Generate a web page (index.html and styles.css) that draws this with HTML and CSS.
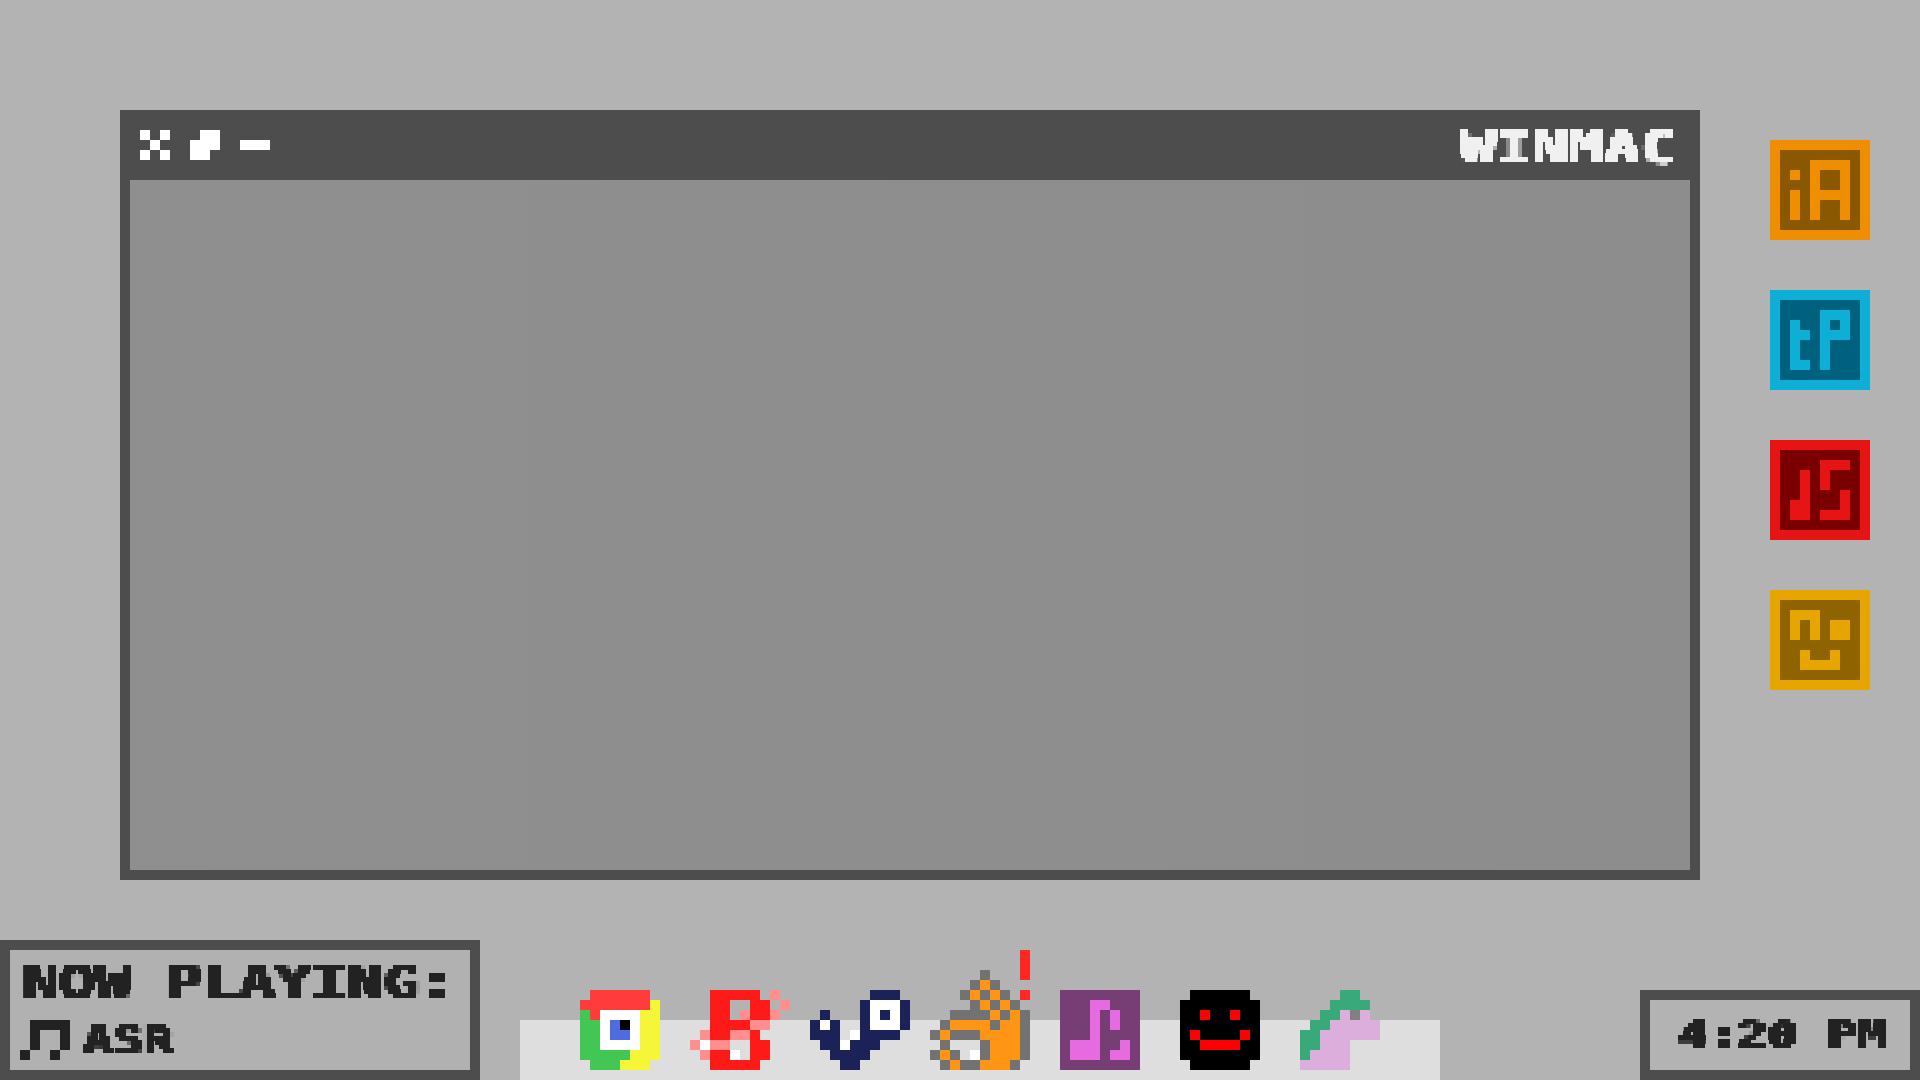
FILE: index.html
```html
<!DOCTYPE html>
<html lang="en">
<head>
<meta charset="utf-8">
<title>WINMAC</title>
<link rel="stylesheet" href="styles.css">
</head>
<body>
<svg class="defs" width="0" height="0" aria-hidden="true">
  <filter id="px" x="0" y="0" width="100%" height="100%" color-interpolation-filters="sRGB">
    <feFlood x="2" y="2" width="1" height="1"/>
    <feComposite width="4" height="4"/>
    <feTile result="grid"/>
    <feComposite in="SourceGraphic" in2="grid" operator="in"/>
    <feMorphology operator="dilate" radius="2"/>
    <feComponentTransfer><feFuncA type="linear" slope="3" intercept="-0.7"/></feComponentTransfer>
  </filter>
</svg>
<main class="desktop">
  <section class="window">
    <header class="titlebar">
      <div class="controls">
        <svg class="ctl" width="30" height="30" viewBox="0 0 3 3" shape-rendering="crispEdges"><path fill="#fff" d="M0 0h1v1H0zM2 0h1v1H2zM1 1h1v1H1zM0 2h1v1H0zM2 2h1v1H2z"/></svg>
        <svg class="ctl" width="30" height="30" viewBox="0 0 3 3" shape-rendering="crispEdges"><path fill="#fff" d="M1 0h2v2H2v1H0V1h1z"/></svg>
        <svg class="ctl" width="30" height="30" viewBox="0 0 3 3" shape-rendering="crispEdges"><path fill="#fff" d="M0 1h3v1H0z"/></svg>
      </div>
      <span class="title">WINMAC</span>
    </header>
    <div class="window-body"></div>
  </section>
  <aside class="apps">
    <svg class="app" width="100" height="100" viewBox="0 0 10 10" shape-rendering="crispEdges"><path fill="#ee8e00" d="M0 0h10v10H0z"/><path fill="#8a5800" d="M1 1h8v8H1z"/><path fill="#ee8e00" d="M2 3h1v1H2zM2 5h1v3H2zM4 2h4v6H7V6H5v2H4zM5 3v2h2V3z"/></svg>
    <svg class="app" width="100" height="100" viewBox="0 0 10 10" shape-rendering="crispEdges"><path fill="#0dafd6" d="M0 0h10v10H0z"/><path fill="#00617f" d="M1 1h8v8H1z"/><path fill="#0dafd6" d="M2 3h1v1h1v1H3v2h1v1H2zM5 2h3v3H6v3H5zM6 3v1h1V3z"/></svg>
    <svg class="app" width="100" height="100" viewBox="0 0 10 10" shape-rendering="crispEdges"><path fill="#e61414" d="M0 0h10v10H0z"/><path fill="#7a0000" d="M1 1h8v8H1z"/><path fill="#e61414" d="M3 3h1v5H2V6h1zM5 2h3v1H6v2H5zM7 5h1v3H5V7h2z"/></svg>
    <svg class="app" width="100" height="100" viewBox="0 0 10 10" shape-rendering="crispEdges"><path fill="#e6a500" d="M0 0h10v10H0z"/><path fill="#8f6400" d="M1 1h8v8H1z"/><path fill="#e6a500" d="M2 2h3v3H4V3H3v2H2zM6 3h2v2H6zM3 6h1v1h2V6h1v2H3z"/></svg>
  </aside>
</main>
<footer class="taskbar">
  <div class="now-playing">
    <span class="np-label">NOW PLAYING:</span>
    <div class="np-track">
      <svg class="np-note" width="50" height="40" viewBox="0 0 5 4" shape-rendering="crispEdges"><path fill="#222" d="M1 0h4v3H4V1H2v2H1zM0 3h1v1H0zM3 3h1v1H3z"/></svg>
      <span class="np-name">ASR</span>
    </div>
  </div>
  <nav class="dock">
    <div class="slot"><svg width="80" height="80" viewBox="0 0 8 8" shape-rendering="crispEdges"><path fill="#ff3b3b" d="M1 0h6v2H2v1H1V2H0V1h1z"/><path fill="#f6f639" d="M7 1h1v6H7v1H4V7h1V6h1V2h1z"/><path fill="#42c654" d="M0 2h1v1h1v3h3v1H4v1H1V7H0z"/><path fill="#fff" d="M2 2h4v4H2z"/><path fill="#4e6bdf" d="M3 3h2v2H3z"/><path fill="#000" d="M4 3h1v1H4z"/></svg></div>
    <div class="slot"><svg width="100" height="80" viewBox="0 0 10 8" shape-rendering="crispEdges"><path fill="#ff1a1a" d="M2 0h5v1H2zM2 1h2v1H2zM6 1h2v1H6zM2 2h2v1H2zM6 2h2v1H6zM2 3h4v1H2zM2 4h2v1H2zM6 4h1v1H6zM6 5h2v1H6zM2 6h2v1H2zM6 6h2v1H6zM2 7h5v1H2z"/><path fill="#ff8e8e" d="M8 0h1v1H8zM9 1h1v1H9zM8 2h1v1H8zM5 2h1v1H5zM6 3h2v1H6zM1 4h1v1H1zM4 4h2v1H4zM0 5h1v1H0zM2 5h2v1H2zM1 6h1v1H1z"/><path fill="#fff" d="M1 5h1v1H1zM4 6h1v1H4z"/></svg></div>
    <div class="slot"><svg width="100" height="80" viewBox="0 0 10 8" shape-rendering="crispEdges"><path fill="#1a2258" d="M6 0h3v1H6zM5 1h1v3H5zM9 1h1v3H9zM1 2h1v1H1zM7 2h1v1H7zM0 3h1v1H0zM2 3h1v1H2zM0 4h3v1H0zM5 4h4v1H5zM1 5h2v1H1zM4 5h3v1H4zM2 6h4v1H2zM3 7h2v1H3z"/><path fill="#fff" d="M6 1h3v1H6zM6 2h1v1H6zM8 2h1v1H8zM6 3h3v1H6zM1 3h1v1H1zM4 4h1v1H4zM3 5h1v1H3z"/></svg></div>
    <div class="slot"><svg width="100" height="120" viewBox="0 -2 10 12" shape-rendering="crispEdges"><path fill="#ff2626" d="M9-2h1v3H9zM9 2h1v1H9z"/><path fill="#727272" d="M5 0h1v1H5zM4 1h1v1H4zM6 1h1v1H6zM3 2h1v1H3zM5 2h1v1H5zM7 2h1v1H7zM4 3h1v1H4zM6 3h1v1H6zM8 3h1v1H8zM2 4h4v1H2zM7 4h1v1H7zM9 4h1v5H9zM1 5h1v1H1zM6 5h1v1H6zM0 6h1v1H0zM2 6h3v1H2zM1 7h1v1H1zM5 7h1v2H5zM0 8h1v1H0zM2 8h1v1H2zM1 9h1v1H1zM3 9h2v1H3zM8 9h1v1H8z"/><path fill="#ff9514" d="M5 1h1v1H5zM4 2h1v1H4zM6 2h1v1H6zM5 3h1v1H5zM7 3h1v1H7zM6 4h1v1H6zM8 4h1v1H8zM2 5h4v1H2zM7 5h2v1H7zM1 6h1v1H1zM5 6h4v1H5zM6 7h3v2H6zM1 8h1v1H1zM2 9h1v1H2zM5 9h3v1H5z"/><path fill="#fff" d="M4 8h1v1H4z"/></svg></div>
    <div class="slot"><svg width="80" height="80" viewBox="0 0 8 8" shape-rendering="crispEdges"><path fill="#773e75" d="M0 0h8v8H0z"/><path fill="#e66be0" d="M3 1h2v1H4v5H1V5h2zM5 2h1v2H5zM6 5h1v2H5V6h1z"/></svg></div>
    <div class="slot"><svg width="80" height="80" viewBox="0 0 8 8" shape-rendering="crispEdges"><path fill="#000" d="M1 0h6v1h1v6H7v1H1V7H0V1h1z"/><path fill="#f00" d="M2 2h1v1H2zM5 2h1v1H5zM1 4h1v1H1zM6 4h1v1H6zM2 5h4v1H2z"/></svg></div>
    <div class="slot"><svg width="80" height="80" viewBox="0 0 8 8" shape-rendering="crispEdges"><path fill="#3aa97a" d="M4 0h2v1h1v1H4v1H3v1H2v2H1v1H0V4h1V3h1V2h1V1h1z"/><path fill="#dcaedc" d="M4 2h3v1h1v2H5v3H0V7h1V6h1V4h1V3h1z"/><path fill="#808080" d="M5 2h1v1H5z"/></svg></div>
  </nav>
  <div class="clock"><span class="clock-time">4:20 PM</span></div>
</footer>
</body>
</html>
```
FILE: styles.css
```css
* { box-sizing: border-box; }
html, body { margin: 0; padding: 0; }
body {
  width: 1920px;
  height: 1080px;
  overflow: hidden;
  background: #b3b3b3;
  font-family: "DejaVu Sans Mono", "Liberation Mono", monospace;
  font-weight: 700;
  color: #222;
}
.defs { position: absolute; }
svg { display: block; }

.desktop { display: flex; align-items: flex-start; padding: 110px 0 0 120px; height: 940px; }
.window {
  width: 1580px;
  height: 770px;
  border: 10px solid #4d4d4d;
  border-top-width: 0;
  display: flex;
  flex-direction: column;
  background: #4d4d4d;
}
.titlebar { height: 70px; display: flex; align-items: center; justify-content: space-between; padding: 0 0 0 10px; flex: none; }
.controls { display: flex; gap: 20px; }
.window-body { flex: 1; background: linear-gradient(90deg, #8f8f8f, #8d8d8d); }

.title {
  display: block;
  font-size: 44px;
  line-height: 50px;
  width: 162px;
  color: #f0f0f0;
  white-space: nowrap;
  margin-right: 68px;
  padding-top: 6px;
  transform: scaleX(1.36);
  transform-origin: left center;
  filter: url(#px);
}

.apps { display: flex; flex-direction: column; gap: 50px; margin: 30px 0 0 70px; }

.taskbar { display: flex; align-items: flex-end; height: 140px; }
.now-playing {
  width: 480px;
  height: 140px;
  border: 10px solid #4d4d4d;
  background: #b1b1b1;
  padding: 11px 0 0 13px;
  flex: none;
}
.np-label {
  display: block;
  font-size: 44px;
  line-height: 44px;
  width: 330px;
  white-space: nowrap;
  transform: scaleX(1.36);
  transform-origin: left center;
  filter: url(#px);
}
.np-track { display: flex; align-items: center; margin-top: 15px; margin-left: -3px; }
.np-name {
  display: block;
  font-size: 38px;
  line-height: 40px;
  margin-left: 13px;
  width: 70px;
  white-space: nowrap;
  transform: scaleX(1.32);
  transform-origin: left center;
  filter: url(#px);
}
.dock {
  width: 920px;
  height: 60px;
  margin-left: 40px;
  background: #dedede;
  padding: 0 0 10px 40px;
  display: flex;
  align-items: flex-end;
  flex: none;
}
.slot { width: 120px; display: flex; justify-content: center; flex: none; }
.clock {
  width: 280px;
  height: 90px;
  margin-left: 200px;
  border: 10px solid #4d4d4d;
  background: #b3b3b3;
  display: flex;
  align-items: center;
  padding-left: 28px;
  flex: none;
}
.clock-time {
  display: block;
  font-size: 36px;
  line-height: 40px;
  width: 160px;
  white-space: nowrap;
  transform: scaleX(1.38);
  transform-origin: left center;
  filter: url(#px);
}
```
